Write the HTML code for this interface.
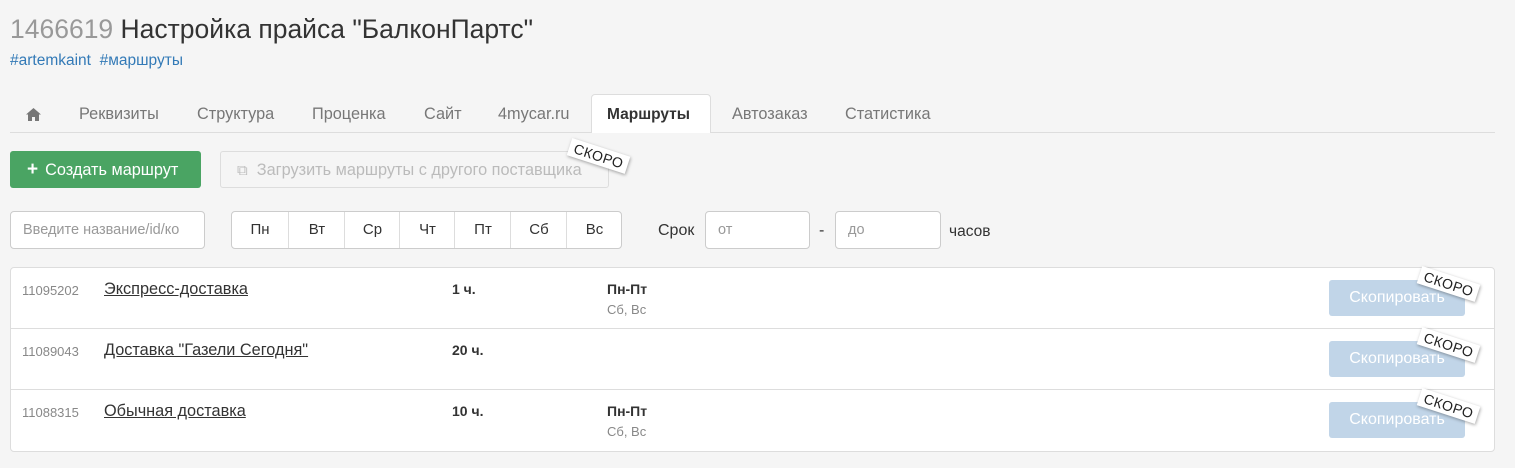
<!DOCTYPE html>
<html><head><meta charset="utf-8"><style>
body{margin:0;background:#f5f5f5;font-family:"Liberation Sans","Noto Sans CJK JP",sans-serif;color:#333;width:1515px;height:468px;overflow:hidden;position:relative}
.a{position:absolute;white-space:nowrap}
.tab{position:absolute;top:95px;height:39px;line-height:39px;font-size:16.3px;color:#777}
.badge{position:absolute;background:#fff;font-size:14px;color:#222;padding:1px 5px;transform:rotate(18deg);box-shadow:1px 1px 3px rgba(0,0,0,.35);letter-spacing:.5px}
.inp{position:absolute;background:#fff;border:1px solid #ccc;border-radius:4px;box-sizing:border-box;height:38px;font-size:14.5px;color:#999;line-height:36px;padding-left:12px;overflow:hidden}
.day{position:absolute;top:0;height:36px;line-height:36px;text-align:center;font-size:15px;border-left:1px solid #ddd}
.row{position:absolute;left:10px;width:1485px;background:#fff;border:1px solid #ddd;box-sizing:border-box}
.copy{position:absolute;left:1318px;width:136px;height:36px;background:#c1d5e8;border-radius:3px;color:#fff;font-size:16px;text-align:center;line-height:36px}
</style></head><body>
<div class="a" style="left:10px;top:14px;font-size:26.5px"><span style="color:#999">1466619</span> Настройка прайса "БалконПартс"</div>
<div class="a" style="left:10px;top:52px;font-size:15.5px;color:#337ab7">#artemkaint&nbsp;&nbsp;#маршруты</div>
<div class="a" style="left:10px;top:132px;width:1485px;border-top:1px solid #ddd"></div>
<div class="a" style="left:591px;top:94px;width:120px;height:39px;background:#fff;border:1px solid #ddd;border-bottom:none;box-sizing:border-box;border-radius:4px 4px 0 0"></div>
<svg class="a" style="left:26px;top:108px" width="15" height="13" viewBox="0 0 15 13"><path d="M7.5 0L0 6.5h2V13h4V9h3v4h4V6.5h2z" fill="#777"/></svg>
<div class="tab" style="left:79px">Реквизиты</div>
<div class="tab" style="left:197px">Структура</div>
<div class="tab" style="left:312px">Проценка</div>
<div class="tab" style="left:424px">Сайт</div>
<div class="tab" style="left:498px">4mycar.ru</div>
<div class="tab" style="left:607px;color:#333;font-weight:bold;font-size:15.5px">Маршруты</div>
<div class="tab" style="left:732px">Автозаказ</div>
<div class="tab" style="left:845px">Статистика</div>
<div class="a" style="left:10px;top:151px;width:191px;height:37px;background:#4aa463;border-radius:3px;color:#fff;font-size:16.3px;line-height:38px"><span style="font-weight:bold;font-size:19px;margin:0 7px 0 17px">+</span>Создать маршрут</div>
<div class="a" style="left:220px;top:151px;width:389px;height:37px;border:1px solid #ddd;border-radius:3px;box-sizing:border-box;color:#bbb;font-size:16.3px;line-height:37px;padding-left:16px"><span style="font-size:15px">⧉</span>&nbsp; Загрузить маршруты с другого поставщика</div>
<div class="badge" style="left:568px;top:147px">СКОРО</div>
<div class="inp" style="left:10px;top:211px;width:195px">Введите название/id/ко</div>
<div class="a" style="left:231px;top:211px;width:391px;height:38px;background:#fff;border:1px solid #ccc;border-radius:4px;box-sizing:border-box">
<div class="day" style="left:0;width:56px;border:none">Пн</div><div class="day" style="left:56px;width:56px">Вт</div><div class="day" style="left:112px;width:55px">Ср</div><div class="day" style="left:167px;width:55px">Чт</div><div class="day" style="left:222px;width:56px">Пт</div><div class="day" style="left:278px;width:56px">Сб</div><div class="day" style="left:334px;width:55px">Вс</div></div>
<div class="a" style="left:658px;top:222px;font-size:16px">Срок</div>
<div class="inp" style="left:705px;top:211px;width:105px">от</div>
<div class="a" style="left:819px;top:222px;font-size:16px">-</div>
<div class="inp" style="left:835px;top:211px;width:106px">до</div>
<div class="a" style="left:949px;top:223px;font-size:15.5px">часов</div>

<div class="row" style="top:267px;height:62px;border-radius:4px 4px 0 0">
<div class="a" style="left:11px;top:15px;font-size:13px;color:#888">11095202</div>
<div class="a" style="left:93px;top:12px;font-size:16.3px;text-decoration:underline">Экспресс-доставка</div>
<div class="a" style="left:441px;top:13px;font-size:14px;font-weight:bold">1 ч.</div>
<div class="a" style="left:596px;top:13px;font-size:14px;font-weight:bold">Пн-Пт</div>
<div class="a" style="left:596px;top:34px;font-size:13px;color:#888">Сб, Вс</div>
<div class="copy" style="top:12px">Скопировать</div></div>
<div class="row" style="top:328px;height:62px">
<div class="a" style="left:11px;top:15px;font-size:13px;color:#888">11089043</div>
<div class="a" style="left:93px;top:12px;font-size:16.3px;text-decoration:underline">Доставка "Газели Сегодня"</div>
<div class="a" style="left:441px;top:13px;font-size:14px;font-weight:bold">20 ч.</div>
<div class="copy" style="top:12px">Скопировать</div></div>
<div class="row" style="top:389px;height:63px;border-radius:0 0 4px 4px">
<div class="a" style="left:11px;top:15px;font-size:13px;color:#888">11088315</div>
<div class="a" style="left:93px;top:12px;font-size:16.3px;text-decoration:underline">Обычная доставка</div>
<div class="a" style="left:441px;top:13px;font-size:14px;font-weight:bold">10 ч.</div>
<div class="a" style="left:596px;top:13px;font-size:14px;font-weight:bold">Пн-Пт</div>
<div class="a" style="left:596px;top:34px;font-size:13px;color:#888">Сб, Вс</div>
<div class="copy" style="top:12px">Скопировать</div></div>
<div class="badge" style="left:1418px;top:275px">СКОРО</div>
<div class="badge" style="left:1418px;top:336px">СКОРО</div>
<div class="badge" style="left:1418px;top:397px">СКОРО</div>
</body></html>
